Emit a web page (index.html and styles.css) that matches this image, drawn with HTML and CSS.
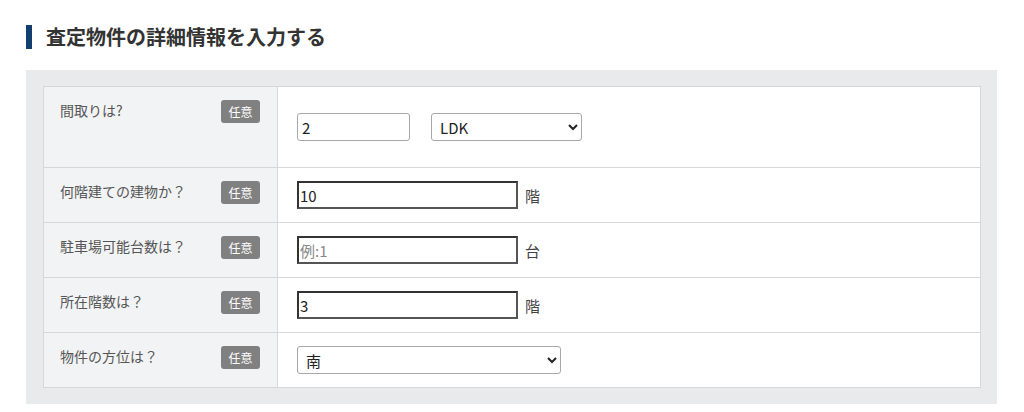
FILE: index.html
```html
<!DOCTYPE html>
<html lang="ja">
<head>
    <meta charset="UTF-8">
    <meta name="viewport" content="width=device-width, initial-scale=1.0">
    <title>査定物件の詳細情報</title>
    <link rel="stylesheet" href="styles.css">
</head>
<body>

    <div class="wrap">
        <h2 class="section-title">査定物件の詳細情報を入力する</h2>

        <div class="form-box">
            <table class="form-table">
                <tr class="row-tall">
                    <th>
                        <div class="label">
                            <span>間取りは?</span>
                            <span class="badge">任意</span>
                        </div>
                    </th>
                    <td>
                        <div class="field">
                            <input type="text" class="input-soft input-short" value="2">
                            <select class="select-soft select-short">
                                <option>LDK</option>
                                <option>DK</option>
                                <option>K</option>
                            </select>
                        </div>
                    </td>
                </tr>
                <tr>
                    <th>
                        <div class="label">
                            <span>何階建ての建物か？</span>
                            <span class="badge">任意</span>
                        </div>
                    </th>
                    <td>
                        <div class="field">
                            <input type="text" class="input-plain" value="10">
                            <span class="unit">階</span>
                        </div>
                    </td>
                </tr>
                <tr>
                    <th>
                        <div class="label">
                            <span>駐車場可能台数は？</span>
                            <span class="badge">任意</span>
                        </div>
                    </th>
                    <td>
                        <div class="field">
                            <input type="text" class="input-plain" placeholder="例:1">
                            <span class="unit">台</span>
                        </div>
                    </td>
                </tr>
                <tr>
                    <th>
                        <div class="label">
                            <span>所在階数は？</span>
                            <span class="badge">任意</span>
                        </div>
                    </th>
                    <td>
                        <div class="field">
                            <input type="text" class="input-plain" value="3">
                            <span class="unit">階</span>
                        </div>
                    </td>
                </tr>
                <tr>
                    <th>
                        <div class="label">
                            <span>物件の方位は？</span>
                            <span class="badge">任意</span>
                        </div>
                    </th>
                    <td>
                        <div class="field">
                            <select class="select-soft select-long">
                                <option>南</option>
                                <option>東</option>
                                <option>西</option>
                                <option>北</option>
                            </select>
                        </div>
                    </td>
                </tr>
            </table>
        </div>
    </div>

</body>
</html>
```

FILE: styles.css
```css
body {
    font-family: "Noto Sans CJK JP", "Noto Sans", sans-serif;
    background-color: #fff;
    color: #333;
    margin: 0;
    padding: 0;
}

.wrap {
    width: 971px;
    padding: 25px 0 0 26px;
}

.section-title {
    margin: 0 0 21px;
    padding-left: 14px;
    border-left: 6px solid #123f6f;
    font-size: 20px;
    font-weight: bold;
    line-height: 24px;
    color: #333;
}

.form-box {
    background-color: #e9eaec;
    padding: 16px 16px 16px 17px;
}

.form-table {
    width: 100%;
    border-collapse: collapse;
    background-color: #fff;
}

.form-table th,
.form-table td {
    border: 1px solid #d6d7d9;
    text-align: left;
    font-weight: normal;
}

.form-table th {
    width: 200px;
    background-color: #f2f3f4;
    vertical-align: top;
    padding: 13px 17px 0 16px;
}

.form-table td {
    vertical-align: middle;
    padding: 13px 19px;
    height: 28px;
}

.row-tall th,
.row-tall td {
    height: 54px;
}

.label {
    display: flex;
    justify-content: space-between;
    align-items: flex-start;
    font-size: 14px;
    color: #555;
    line-height: 20px;
}

.badge {
    background-color: #808080;
    color: #fff;
    font-size: 12px;
    line-height: 23px;
    width: 39px;
    text-align: center;
    border-radius: 3px;
}

.field {
    display: flex;
    align-items: center;
}

input, select {
    box-sizing: border-box;
    height: 28px;
    font-family: "Noto Sans CJK JP", "Noto Sans", sans-serif;
    color: #222;
    margin: 0;
}

.input-soft {
    border: 1px solid #a8a8a8;
    border-radius: 3px;
    padding: 0 4px;
    font-size: 15px;
}

.input-short {
    width: 113px;
    margin-right: 21px;
}

.input-plain {
    width: 221px;
    border: 2px solid #333;
    border-right-color: #555;
    border-bottom-color: #555;
    padding: 0 1px;
    font-size: 15px;
}

.input-plain::placeholder {
    color: #888;
}

.select-soft {
    border: 1px solid #a8a8a8;
    border-radius: 3px;
    background-color: #fff;
    padding: 0 4px;
    font-size: 15px;
}

.select-short {
    width: 151px;
}

.select-long {
    width: 264px;
}

.unit {
    margin-left: 7px;
    font-size: 15px;
    color: #444;
}
```
